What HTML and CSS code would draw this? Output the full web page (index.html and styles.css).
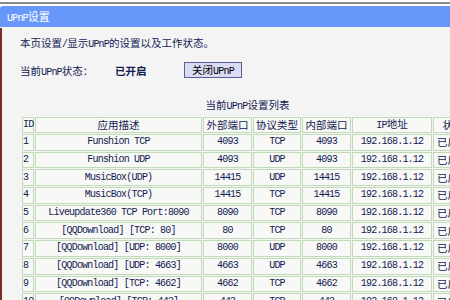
FILE: index.html
```html
<!DOCTYPE html>
<html lang="zh-CN">
<head>
  <meta charset="UTF-8" />
  <title>UPnP设置</title>
  <link rel="stylesheet" href="styles.css">
</head>
<body>
  <div class="frame">
    <div class="topline"></div>
    <div class="titlebar"><span class="en">UPnP</span>设置</div>

    <div class="panel">
      <p class="intro">本页设置<span class="en">/</span>显示<span class="en">UPnP</span>的设置以及工作状态。</p>

      <div class="status-row">
        <span class="label">当前<span class="en">UPnP</span>状态：</span>
        <span class="state">已开启</span>
        <button class="btn">关闭<span class="en">UPnP</span></button>
      </div>

      <table class="list">
        <caption>当前<span class="en">UPnP</span>设置列表</caption>
        <tr>
          <th class="c-id en">ID</th>
          <th class="c-desc">应用描述</th>
          <th class="c-ext">外部端口</th>
          <th class="c-proto">协议类型</th>
          <th class="c-int">内部端口</th>
          <th class="c-ip"><span class="en">IP</span>地址</th>
          <th class="c-state">状态</th>
        </tr>
        <tr><td class="id">1</td><td>Funshion TCP</td><td>4093</td><td>TCP</td><td>4093</td><td>192.168.1.12</td><td class="cn">已启用</td></tr>
        <tr><td class="id">2</td><td>Funshion UDP</td><td>4093</td><td>UDP</td><td>4093</td><td>192.168.1.12</td><td class="cn">已启用</td></tr>
        <tr><td class="id">3</td><td>MusicBox(UDP)</td><td>14415</td><td>UDP</td><td>14415</td><td>192.168.1.12</td><td class="cn">已启用</td></tr>
        <tr><td class="id">4</td><td>MusicBox(TCP)</td><td>14415</td><td>TCP</td><td>14415</td><td>192.168.1.12</td><td class="cn">已启用</td></tr>
        <tr><td class="id">5</td><td>Liveupdate360 TCP Port:8090</td><td>8090</td><td>TCP</td><td>8090</td><td>192.168.1.12</td><td class="cn">已启用</td></tr>
        <tr><td class="id">6</td><td>[QQDownload] [TCP: 80]</td><td>80</td><td>TCP</td><td>80</td><td>192.168.1.12</td><td class="cn">已启用</td></tr>
        <tr><td class="id">7</td><td>[QQDownload] [UDP: 8000]</td><td>8000</td><td>UDP</td><td>8000</td><td>192.168.1.12</td><td class="cn">已启用</td></tr>
        <tr><td class="id">8</td><td>[QQDownload] [UDP: 4663]</td><td>4663</td><td>UDP</td><td>4663</td><td>192.168.1.12</td><td class="cn">已启用</td></tr>
        <tr><td class="id">9</td><td>[QQDownload] [TCP: 4662]</td><td>4662</td><td>TCP</td><td>4662</td><td>192.168.1.12</td><td class="cn">已启用</td></tr>
        <tr><td class="id">10</td><td>[QQDownload] [TCP: 443]</td><td>443</td><td>TCP</td><td>443</td><td>192.168.1.12</td><td class="cn">已启用</td></tr>
      </table>
    </div>
  </div>
</body>
</html>
```

FILE: styles.css
```css
* { margin: 0; padding: 0; box-sizing: border-box; }
body {
  background: #fff;
  font-family: "Noto Sans CJK SC", sans-serif;
  font-size: 10.5px;
  color: #121a52;
  overflow: hidden;
}
.en {
  font-family: "Liberation Mono", monospace;
  font-size: 10px;
  letter-spacing: -0.8px;
}
.frame {
  width: 450px;
  height: 300px;
  overflow: hidden;
  padding-top: 2px;
}
.topline {
  height: 2px;
  background: #8a8a8a;
  margin-bottom: 2px;
}
.titlebar {
  height: 22px;
  line-height: 21px;
  padding-left: 7px;
  background: #6797f8;
  color: #fff;
  font-size: 11px;
  border-top-left-radius: 3px;
  border-bottom: 1px solid #eef2fb;
}
.panel {
  height: 280px;
  background: #f4f4f4;
  border-left: 2px solid #7a2e22;
  padding: 7px 0 0 18px;
}
.intro {
  line-height: 16px;
}
.status-row {
  display: flex;
  align-items: center;
  height: 18px;
  margin-top: 8px;
}
.label {
  width: 95px;
}
.state {
  font-weight: bold;
  width: 67px;
}
.btn {
  width: 58px;
  height: 16px;
  margin-left: 2px;
  background: #dadcf5;
  border: 1px solid #5b5f95;
  color: #000;
  font-family: inherit;
  font-size: 10.5px;
  line-height: 14px;
}
.list {
  margin: 19px 0 0 1px;
  border-collapse: separate;
  border-spacing: 1px;
  table-layout: fixed;
  width: 453px;
}
.list caption {
  height: 18px;
  line-height: 14px;
  padding-bottom: 4px;
}
.list th, .list td {
  border: 1px solid #c0dbb7;
  background: #f8f8f6;
  font-weight: normal;
  text-align: center;
  white-space: nowrap;
  overflow: hidden;
}
.list th {
  height: 14px;
  line-height: 12px;
}
.list td {
  height: 16.7px;
  line-height: 14px;
  font-family: "Liberation Mono", monospace;
  font-size: 10px;
  letter-spacing: -0.8px;
}
.list td.cn {
  font-family: "Noto Sans CJK SC", sans-serif;
  font-size: 10.5px;
  letter-spacing: 0;
  text-align: left;
  padding-left: 3px;
}
.list th.c-id, .list td.id {
  text-align: left;
  padding-left: 0;
  overflow: visible;
}
.c-id { width: 12px; }
.c-desc { width: 167px; }
.c-ext { width: 49px; }
.c-proto { width: 48px; }
.c-int { width: 49px; }
.c-ip { width: 80px; }
.c-state { width: 40px; }
```
